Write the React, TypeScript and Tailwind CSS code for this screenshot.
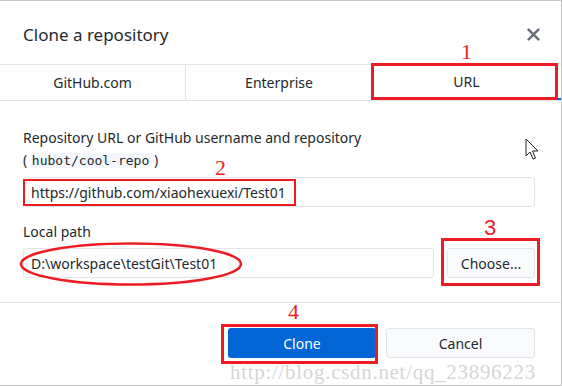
import React from "react";

const red = "border-[#ec1c24]";

function Mark({ n, className }: { n: string; className: string }) {
  return (
    <span
      className={`absolute text-[22px] leading-none text-[#ec1c24] font-['Liberation_Serif',serif] ${className}`}
    >
      {n}
    </span>
  );
}

export default function App() {
  return (
    <div className="relative w-[562px] h-[386px] overflow-hidden bg-white border-t border-r border-b border-[#c4c4c4] font-['Noto_Sans','Open_Sans',sans-serif] text-[#24292e]">
      {/* header */}
      <div className="flex h-[63px] items-center justify-between pl-[23px] pr-[21px] pt-[4px]">
        <h1 className="text-[17px] leading-none">Clone a repository</h1>
        <svg width="13" height="13" viewBox="0 0 12 12" className="text-[#6a737d]">
          <path d="M1.5 1.5 L10.5 10.5 M10.5 1.5 L1.5 10.5" stroke="currentColor" strokeWidth="2.4" strokeLinecap="round" />
        </svg>
      </div>

      {/* tabs */}
      <div className="flex h-[37px] border-y border-[#e1e4e8] text-[14px]">
        <div className="flex w-[186px] items-center justify-center border-r border-[#e1e4e8]">GitHub.com</div>
        <div className="flex w-[186px] items-center justify-center">Enterprise</div>
        <div className="flex flex-1 items-center justify-center border-b-2 border-[#0366d6]">URL</div>
      </div>

      {/* body */}
      <div className="pl-[23px] pr-[26px] pt-[27px] text-[14px]">
        <div className="leading-[20px]">Repository URL or GitHub username and repository</div>
        <div className="leading-[20px] mt-[2px]">
          ({" "}
          <code className="bg-[#f3f6fa] px-[1px] font-['DejaVu_Sans_Mono',monospace] text-[13px]">hubot/cool-repo</code> )
        </div>
        <div className="mt-[6px] flex h-[30px] items-center rounded-[3px] border border-[#e1e4e8] px-[7px]">
          https://github.com/xiaohexuexi/Test01
        </div>

        <div className="mt-[15px] leading-[20px]">Local path</div>
        <div className="mt-[6px] flex gap-[13px]">
          <div className="flex h-[30px] flex-1 items-center rounded-[3px] border border-[#e1e4e8] px-[7px]">
            D:\workspace\testGit\Test01
          </div>
          <button className="h-[30px] w-[88px] rounded-[3px] border border-[#e1e4e8] bg-[#fafbfc] text-[14px]">
            Choose...
          </button>
        </div>
      </div>

      {/* footer */}
      <div className="mt-[24px] flex justify-end gap-[10px] border-t border-[#e1e4e8] pr-[26px] pt-[25px] text-[14px]">
        <button className="h-[30px] w-[148px] rounded-[3px] bg-[#0366d6] text-white">Clone</button>
        <button className="h-[30px] w-[149px] rounded-[3px] border border-[#e1e4e8] bg-[#fafbfc]">Cancel</button>
      </div>

      {/* watermark */}
      <div className="absolute left-[230px] top-[356px] text-[21px] tracking-[0.7px] text-[#d6d6d6] font-['Liberation_Serif',serif]">
        http://blog.csdn.net/qq_23896223
      </div>

      {/* cursor */}
      <svg className="absolute left-[525px] top-[137px]" width="16" height="24" viewBox="0 0 16 24">
        <path d="M1 1 L1 18 L5 14 L8 21 L10.5 20 L7.5 13 L13 13 Z" fill="white" stroke="#222" strokeWidth="1" strokeLinejoin="round" />
      </svg>

      {/* annotations */}
      <div className={`absolute left-[371px] top-[62px] h-[37px] w-[187px] border-[3px] ${red}`} />
      <Mark n="1" className="left-[461px] top-[40px]" />

      <div className={`absolute left-[23px] top-[178px] h-[27px] w-[273px] border-[2.5px] ${red}`} />
      <Mark n="2" className="left-[215px] top-[156px]" />

      <svg className="absolute left-[18px] top-[240px]" width="226" height="46" viewBox="0 0 226 46">
        <ellipse cx="113" cy="23" rx="110" ry="20.5" fill="none" stroke="#ec1c24" strokeWidth="2.5" />
      </svg>

      <div className={`absolute left-[441px] top-[237px] h-[48px] w-[99px] border-[3px] ${red}`} />
      <span className="absolute left-[484px] top-[216px] text-[22px] leading-none text-[#ec1c24] font-['Liberation_Sans',sans-serif]">3</span>

      <div className={`absolute left-[221px] top-[323px] h-[40px] w-[157px] border-[3px] ${red}`} />
      <Mark n="4" className="left-[288px] top-[300px]" />
    </div>
  );
}
